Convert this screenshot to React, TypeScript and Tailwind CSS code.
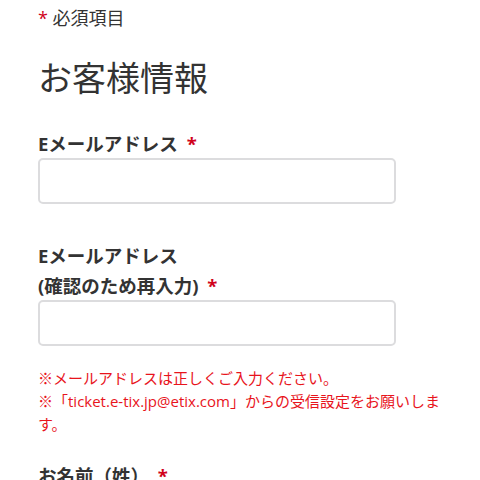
export default function App() {
  return (
    <div
      className="w-[480px] h-[480px] overflow-hidden bg-white text-[#333]"
      style={{ fontFamily: '"Open Sans", "Noto Sans CJK JP", sans-serif' }}
    >
      <div className="pl-[38px] pr-[40px]">
        <p className="pt-[6px] text-[18px] leading-[24px] text-[#333]">
          <span className="text-[#d0021b]">*</span> 必須項目
        </p>

        <h2 className="mt-[28px] text-[34px] leading-[40px] font-normal text-[#333]">お客様情報</h2>

        <div className="mt-[31px]">
          <label className="block text-[18.5px] leading-[30px] font-bold text-[#333]">
            Eメールアドレス <span className="ml-[4px] text-[#d0021b]">*</span>
          </label>
          <input
            type="email"
            className="-mt-px block w-[358px] h-[46px] rounded-[5px] border-2 border-[#dcdcde] bg-white px-3"
          />
        </div>

        <div className="mt-[37px]">
          <label className="block text-[18.5px] leading-[30px] font-bold text-[#333]">
            Eメールアドレス
            <br />
            (確認のため再入力) <span className="ml-[4px] text-[#d0021b]">*</span>
          </label>
          <input
            type="email"
            className="-mt-px block w-[358px] h-[46px] rounded-[5px] border-2 border-[#dcdcde] bg-white px-3"
          />
        </div>

        <div className="mt-[21px] text-[15px] leading-[23px] text-[#e8141c]">
          <p>※メールアドレスは正しくご入力ください。</p>
          <p>※「ticket.e-tix.jp@etix.com」からの受信設定をお願いします。</p>
        </div>

        <div className="mt-[25px]">
          <label className="block text-[18.5px] leading-[30px] font-bold text-[#333]">
            お名前（姓） <span className="ml-[4px] text-[#d0021b]">*</span>
          </label>
        </div>
      </div>
    </div>
  );
}
